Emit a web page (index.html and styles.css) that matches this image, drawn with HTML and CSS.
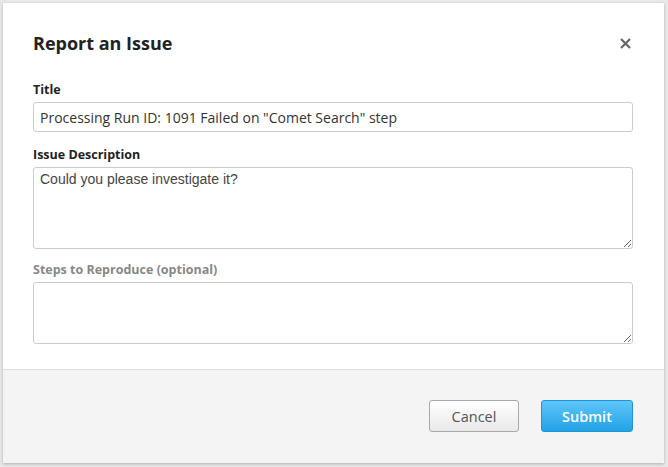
FILE: index.html
```html
<!DOCTYPE html>
<html>
<head>
<meta charset="utf-8">
<link rel="stylesheet" href="styles.css">
</head>
<body>
<div class="dialog">
  <div class="header">
    <h1 class="title">Report an Issue</h1>
    <button class="close" aria-label="Close">
      <svg width="11" height="11" viewBox="0 0 11 11"><path d="M1 1 L10 10 M10 1 L1 10" stroke="#666" stroke-width="2.2" stroke-linecap="butt"/></svg>
    </button>
  </div>
  <div class="body">
    <label class="label">Title</label>
    <input class="input" type="text" value="Processing Run ID: 1091 Failed on &quot;Comet Search&quot; step">
    <label class="label gap">Issue Description</label>
    <textarea class="area area-desc">Could you please investigate it?</textarea>
    <label class="label gap muted">Steps to Reproduce (optional)</label>
    <textarea class="area area-steps"></textarea>
  </div>
  <div class="footer">
    <button class="btn btn-cancel">Cancel</button>
    <button class="btn btn-submit">Submit</button>
  </div>
</div>
</body>
</html>
```
FILE: styles.css
```css
html, body {
  margin: 0;
  padding: 0;
}
body {
  background: #e9e9e9;
  padding: 3px 4px 4px 3px;
  font-family: "Open Sans", "Liberation Sans", sans-serif;
  height: 467px;
  box-sizing: border-box;
}
.dialog {
  background: #fff;
  width: 661px;
  height: 460px;
  box-shadow: 0 1px 3px rgba(0,0,0,0.25);
  display: flex;
  flex-direction: column;
}
.header {
  display: flex;
  align-items: center;
  justify-content: space-between;
  padding: 28px 33px 0 30px;
}
.title {
  margin: 0;
  font-size: 18px;
  line-height: 24px;
  font-weight: 700;
  color: #222;
}
.close {
  border: 0;
  background: none;
  padding: 0;
  width: 11px;
  height: 11px;
  display: flex;
}
.body {
  padding: 26px 31px 0 30px;
  display: flex;
  flex-direction: column;
  flex: 1;
}
.label {
  font-size: 12.5px;
  line-height: 17px;
  font-weight: 700;
  color: #222;
  margin-bottom: 4px;
}
.label.gap {
  margin-top: 14px;
}
.label.muted {
  color: #888;
  margin-top: 12px;
}
.input {
  display: block;
  box-sizing: border-box;
  width: 600px;
  height: 30px;
  border: 1px solid #ccc;
  border-radius: 3px;
  padding: 0 6px;
  font-family: "Open Sans", "Liberation Sans", sans-serif;
  font-size: 14px;
  color: #333;
  outline: none;
}
.area {
  display: block;
  box-sizing: border-box;
  width: 600px;
  border: 1px solid #ccc;
  border-radius: 3px;
  padding: 3px 6px;
  font-family: "Liberation Sans", Arial, sans-serif;
  font-size: 14px;
  line-height: 17px;
  color: #444;
  outline: none;
  resize: vertical;
}
.area-desc {
  height: 82px;
}
.area-steps {
  height: 62px;
}
.footer {
  height: 94px;
  box-sizing: border-box;
  border-top: 1px solid #ddd;
  background: #f4f4f4;
  display: flex;
  justify-content: flex-end;
  align-items: flex-start;
  gap: 22px;
  padding: 30px 31px 0 0;
}
.btn {
  height: 32px;
  box-sizing: border-box;
  border-radius: 3px;
  font-family: "Open Sans", "Liberation Sans", sans-serif;
  font-size: 14.5px;
  padding: 0;
}
.btn-cancel {
  width: 90px;
  border: 1px solid #a8a8a8;
  background: linear-gradient(#ffffff, #e9e9e9);
  color: #555;
}
.btn-submit {
  width: 92px;
  border: 1px solid #1d95d6;
  background: linear-gradient(#5ec6fa, #22a2e5);
  color: #fff;
  font-weight: 600;
}
```
